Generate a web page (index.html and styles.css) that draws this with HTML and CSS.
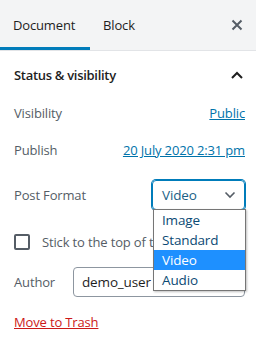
FILE: index.html
```html
<!DOCTYPE html>
<html lang="en">
<head>
    <meta charset="UTF-8">
    <meta name="viewport" content="width=device-width, initial-scale=1.0">
    <title>Document settings</title>
    <link rel="stylesheet" href="styles.css">
</head>
<body>
    <div class="sidebar">
        <div class="tabs">
            <div class="tab active">Document</div>
            <div class="tab">Block</div>
            <div class="close">
                <svg width="12" height="12" viewBox="0 0 12 12"><path d="M1.5 1.5l9 9M10.5 1.5l-9 9" stroke="#555d66" stroke-width="2" fill="none"/></svg>
            </div>
        </div>

        <div class="panel">
            <div class="panel-title">
                <span>Status &amp; visibility</span>
                <svg width="12" height="8" viewBox="0 0 12 8"><path d="M1 7l5-5 5 5" stroke="#1e1e1e" stroke-width="2" fill="none"/></svg>
            </div>

            <div class="row row-visibility">
                <span class="label">Visibility</span>
                <a class="link" href="#">Public</a>
            </div>

            <div class="row row-publish">
                <span class="label">Publish</span>
                <a class="link" href="#">20 July 2020 2:31 pm</a>
            </div>

            <div class="row row-format">
                <span class="label">Post Format</span>
                <div class="select">
                    <span>Video</span>
                    <svg width="12" height="8" viewBox="0 0 12 8"><path d="M1.5 1.5l4.5 4.5 4.5-4.5" stroke="#555d66" stroke-width="1.6" fill="none"/></svg>
                </div>
            </div>

            <div class="row row-sticky">
                <span class="checkbox"></span>
                <span class="label">Stick to the top of the blog</span>
            </div>

            <div class="row row-author">
                <span class="label">Author</span>
                <div class="author-input">demo_user</div>
            </div>

            <a class="trash" href="#">Move to Trash</a>

            <ul class="dropdown">
                <li>Image</li>
                <li>Standard</li>
                <li class="selected">Video</li>
                <li>Audio</li>
            </ul>
        </div>
    </div>
</body>
</html>
```

FILE: styles.css
```css
body {
    margin: 0;
    font-family: "Open Sans", "Noto Sans", sans-serif;
    font-size: 13px;
    letter-spacing: -0.15px;
    color: #1e1e1e;
    background: #ffffff;
}

.sidebar {
    width: 256px;
    height: 342px;
    overflow: hidden;
}

.tabs {
    display: flex;
    align-items: center;
    height: 50px;
    background: #f3f4f5;
    border-bottom: 1px solid #e2e4e7;
}

.tab {
    height: 50px;
    line-height: 50px;
    padding: 0 16px 0 13px;
    color: #1e1e1e;
    box-sizing: border-box;
}

.tab.active {
    width: 90px;
    box-shadow: inset 0 -3px 0 #007cba;
}

.close {
    margin-left: auto;
    margin-right: 13px;
    display: flex;
}

.panel {
    position: relative;
    padding: 0 11px 0 14px;
}

.panel-title {
    display: flex;
    justify-content: space-between;
    align-items: center;
    height: 48px;
    font-size: 13px;
    font-weight: 600;
    letter-spacing: -0.3px;
    color: #1e1e1e;
}

.panel-title svg {
    margin-right: 2px;
}

.row {
    display: flex;
    align-items: center;
    justify-content: space-between;
}

.label {
    color: #555d66;
}

.link {
    color: #0073aa;
    text-decoration: underline;
}

.row-visibility {
    height: 28px;
}

.row-publish {
    height: 28px;
    margin-top: 9px;
}

.row-format {
    height: 30px;
    margin-top: 16px;
}

.select {
    width: 93px;
    height: 30px;
    box-sizing: border-box;
    border: 1px solid #007cba;
    box-shadow: 0 0 0 1px #007cba;
    border-radius: 4px;
    display: flex;
    align-items: center;
    justify-content: space-between;
    padding: 0 8px 0 9px;
    color: #1a5f86;
    font-size: 13.5px;
}

.row-sticky {
    justify-content: flex-start;
    height: 24px;
    margin-top: 20px;
    white-space: nowrap;
}

.checkbox {
    width: 16px;
    height: 16px;
    box-sizing: border-box;
    border: 2px solid #555d66;
    border-radius: 2px;
    margin-right: 12px;
}

.row-author {
    height: 30px;
    margin-top: 13px;
}

.author-input {
    width: 172px;
    height: 30px;
    box-sizing: border-box;
    border: 1px solid #8d96a0;
    border-radius: 4px;
    line-height: 28px;
    padding-left: 8px;
    color: #1e1e1e;
    font-size: 13.5px;
}

.trash {
    display: block;
    margin-top: 15px;
    line-height: 20px;
    color: #cc1818;
    text-decoration: underline;
}

.dropdown {
    position: absolute;
    top: 158px;
    left: 153px;
    width: 93px;
    box-sizing: border-box;
    margin: 0;
    padding: 0;
    list-style: none;
    background: #ffffff;
    border: 1px solid #767676;
    box-shadow: 1px 1px 2px rgba(0, 0, 0, 0.25);
    font-size: 13.5px;
}

.dropdown li {
    height: 20px;
    line-height: 20px;
    padding-left: 8px;
    color: #0b4a74;
}

.dropdown li.selected {
    background: #1e90ff;
    color: #ffffff;
}
```
